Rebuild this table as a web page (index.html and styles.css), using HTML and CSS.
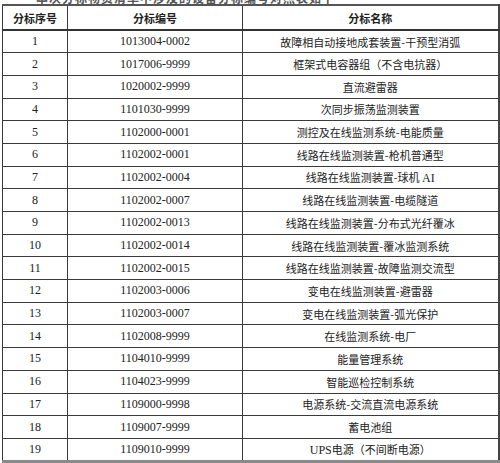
FILE: index.html
```html
<!DOCTYPE html>
<html lang="zh">
<head>
<meta charset="utf-8">
<link rel="stylesheet" href="styles.css">
</head>
<body>
<div class="caption"><span class="caption-text">本次分标物资清单中涉及的设备分标编号对照表如下</span></div>
<table class="grid">
  <colgroup>
    <col class="c1"><col class="c2"><col class="c3">
  </colgroup>
  <thead>
    <tr><th>分标序号</th><th>分标编号</th><th>分标名称</th></tr>
  </thead>
  <tbody>
    <tr><td class="num">1</td><td class="num">1013004-0002</td><td class="name">故障相自动接地成套装置-干预型消弧</td></tr>
    <tr><td class="num">2</td><td class="num">1017006-9999</td><td class="name">框架式电容器组（不含电抗器）</td></tr>
    <tr><td class="num">3</td><td class="num">1020002-9999</td><td class="name">直流避雷器</td></tr>
    <tr><td class="num">4</td><td class="num">1101030-9999</td><td class="name">次同步振荡监测装置</td></tr>
    <tr><td class="num">5</td><td class="num">1102000-0001</td><td class="name">测控及在线监测系统-电能质量</td></tr>
    <tr><td class="num">6</td><td class="num">1102002-0001</td><td class="name">线路在线监测装置-枪机普通型</td></tr>
    <tr><td class="num">7</td><td class="num">1102002-0004</td><td class="name">线路在线监测装置-球机 <span class="lat">AI</span></td></tr>
    <tr><td class="num">8</td><td class="num">1102002-0007</td><td class="name">线路在线监测装置-电缆隧道</td></tr>
    <tr><td class="num">9</td><td class="num">1102002-0013</td><td class="name">线路在线监测装置-分布式光纤覆冰</td></tr>
    <tr><td class="num">10</td><td class="num">1102002-0014</td><td class="name">线路在线监测装置-覆冰监测系统</td></tr>
    <tr><td class="num">11</td><td class="num">1102002-0015</td><td class="name">线路在线监测装置-故障监测交流型</td></tr>
    <tr><td class="num">12</td><td class="num">1102003-0006</td><td class="name">变电在线监测装置-避雷器</td></tr>
    <tr><td class="num">13</td><td class="num">1102003-0007</td><td class="name">变电在线监测装置-弧光保护</td></tr>
    <tr><td class="num">14</td><td class="num">1102008-9999</td><td class="name">在线监测系统-电厂</td></tr>
    <tr><td class="num">15</td><td class="num">1104010-9999</td><td class="name">能量管理系统</td></tr>
    <tr><td class="num">16</td><td class="num">1104023-9999</td><td class="name">智能巡检控制系统</td></tr>
    <tr><td class="num">17</td><td class="num">1109000-9998</td><td class="name">电源系统-交流直流电源系统</td></tr>
    <tr><td class="num">18</td><td class="num">1109007-9999</td><td class="name">蓄电池组</td></tr>
    <tr><td class="num">19</td><td class="num">1109010-9999</td><td class="name"><span class="lat">UPS</span>电源（不间断电源）</td></tr>
  </tbody>
</table>
</body>
</html>
```
FILE: styles.css
```css
html, body {
  margin: 0;
  padding: 0;
  background: #ffffff;
}
body {
  width: 500px;
  height: 463px;
  overflow: hidden;
  font-family: "Noto Sans CJK SC", "Liberation Sans", sans-serif;
  color: #1e1e1e;
}
.caption {
  height: 4px;
  overflow: hidden;
  display: flex;
  align-items: flex-end;
  padding-left: 36px;
  font-size: 12px;
  line-height: 12px;
  color: #555;
  font-weight: bold;
  letter-spacing: 1px;
}
.caption-text {
  flex: none;
  white-space: nowrap;
}
.grid {
  margin-left: 2px;
  width: 496px;
  border-collapse: collapse;
  table-layout: fixed;
  border-top: 2px solid #555;
  border-left: 1px solid #aaa;
  border-right: 2px solid #444;
  border-bottom: 3px solid #8a8a8a;
}
.c1 { width: 65px; }
.c2 { width: 175px; }
.c3 { width: 256px; }
.grid th, .grid td {
  border: 1px solid #3a3a3a;
  padding: 0;
  text-align: center;
  vertical-align: middle;
  white-space: nowrap;
}
.grid th {
  height: 23px;
  font-size: 11px;
  font-weight: bold;
  color: #222;
  border-bottom: 2px solid #333;
}
.grid tbody tr {
  height: 22.7px;
}
.num {
  font-family: "Liberation Serif", serif;
  font-size: 12px;
  color: #222;
}
.name {
  font-size: 11px;
  color: #222;
}
.lat {
  font-family: "Liberation Serif", serif;
  font-size: 12px;
}
```
